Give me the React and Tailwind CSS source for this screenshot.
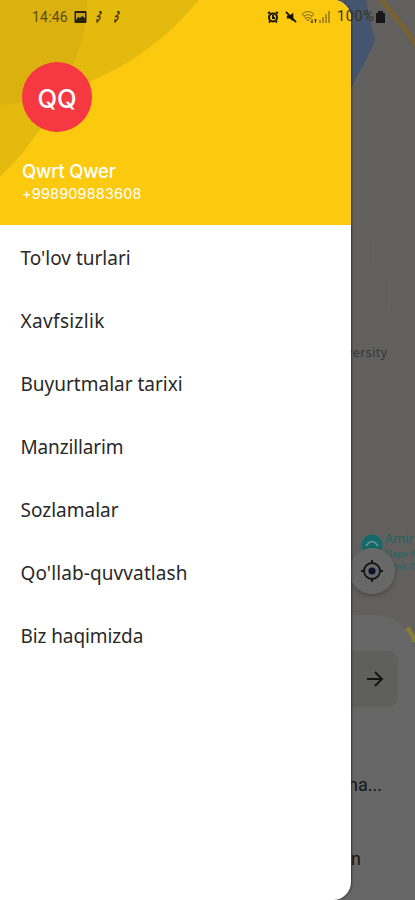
import React from 'react';

const items = [
  { label: "To'lov turlari", tracking: '' },
  { label: 'Xavfsizlik', tracking: 'tracking-[0.35px]' },
  { label: 'Buyurtmalar tarixi', tracking: '' },
  { label: 'Manzillarim', tracking: 'tracking-[-0.15px]' },
  { label: 'Sozlamalar', tracking: '' },
  { label: "Qo'llab-quvvatlash", tracking: 'tracking-[0.1px]' },
  { label: 'Biz haqimizda', tracking: 'tracking-[-0.1px]' },
];

function StatusBar() {
  return (
    <div className="absolute inset-x-0 top-0 z-20 flex h-[34px] items-center pl-8 font-['Roboto',sans-serif] text-[14px] text-[#5a4a10]">
      <span className="w-[42px] tracking-[0.2px]">14:46</span>
      <svg className="h-[12px] w-[13px]" viewBox="0 0 13 12">
        <rect x="0.5" y="0" width="12" height="12" rx="1" fill="#29230a" />
        <path d="M2 9V2h9v5L8 5 6 7 4 6Z" fill="#c9a51b" />
      </svg>
      {[0, 1].map((n) => (
        <svg key={n} className={n ? 'ml-[10px] h-3 w-2' : 'ml-[8px] h-3 w-2'} viewBox="0 0 8 12" fill="none" stroke="#4a3d0c" strokeWidth="1.3">
          <path d="M4.5 1 6 2.5 3 5.5 5.5 6M3 5.5 2 5M5.5 6 4 9 2 10.5M2 8v3h1" />
          <path d="M4 0.5h2v2" />
        </svg>
      ))}
      <svg className="ml-[146px] h-[12px] w-[12px]" viewBox="0 0 12 12" fill="none" stroke="#171407" strokeWidth="2">
        <circle cx="6" cy="6.5" r="4" />
        <path d="M1 2.5 3 1M9 1l2 1.5M6 4v3h2M2 11.5l1-1M10 11.5l-1-1" />
      </svg>
      <svg className="ml-[6px] h-[12px] w-[12px]" viewBox="0 0 13 13">
        <path d="M2 5h3l4-3v9L5 8H2Z" fill="#171407" />
        <path d="m1 1 11 11" stroke="#171407" strokeWidth="1.8" />
      </svg>
      <svg className="ml-[4px] h-[14px] w-[17px]" viewBox="0 0 17 14" fill="none" stroke="#8b711a" strokeWidth="1">
        <path d="M1 4q6-5 12 0L7 11ZM3 6q4-3 8 0M5 8q2-1 4 0" />
        <path d="M11 9v4M9.5 11.5 11 13l1-1.5M14.5 13V9M13.5 10.5l1-1.5 1 1.5" stroke="#4a3d0c" />
      </svg>
      <svg className="ml-[1px] h-3 w-3" viewBox="0 0 12 12" fill="#ad8b18">
        <path d="M0 9h2v3H0ZM3 6h2v6H3ZM6 3h2v9H6ZM9 0h2v12H9Z" />
      </svg>
      <span className="ml-[6px] w-[39px] whitespace-nowrap text-[14.5px] tracking-[0.6px] text-[#38321d]">100%</span>
      <svg className="h-[12px] w-[9px]" viewBox="0 0 9 12"><path d="M0 2h2V0h5v2h2v10H0Z" fill="#171717" /></svg>
    </div>
  );
}

function MapScreen() {
  return (
    <div className="absolute inset-0 bg-[#61605e]">
      <svg className="absolute inset-0 h-[900px] w-[415px]" viewBox="0 0 415 900" fill="none">
        <path d="M343 0H366Q369 16 375 41L367 58 351 88V20Z" fill="#445570" />
        <path d="M380-2 390 11 403 26 418 47" stroke="#7b642b" strokeWidth="5" />
        <path d="M380-2 390 11 403 26 418 47" stroke="#686052" strokeWidth="1" />
        <path d="M374 240V266M364 290V306M389 280V310M351 412 371 430" stroke="#656461" />
        <path d="M407 628 415 642" stroke="#877b35" strokeWidth="6" />
        <circle cx="372" cy="545" r="10.5" fill="#126b6b" />
        <path d="M366 546q6-9 12 0M368 549h8" stroke="#78918e" strokeWidth="1.7" />
      </svg>
      <span className="absolute left-[346px] top-[345px] font-['Noto_Sans',sans-serif] text-[12.5px] leading-[16px] tracking-[0.4px] text-[#353739]">versity</span>
      <div className="absolute left-[385px] top-[530px] flex flex-col whitespace-nowrap font-['Noto_Sans',sans-serif] text-[#246361]">
        <span className="text-[13px] leading-[17px]">Amir</span>
        <span className="text-[9.5px] leading-[13px]">Парк А</span>
        <span className="pl-[7px] text-[9.5px] leading-[13px]">mir T</span>
      </div>
      <div className="absolute left-[349px] top-[548px] flex h-[46px] w-[46px] items-center justify-center rounded-full bg-[#686868] shadow-[0_2px_5px_rgba(0,0,0,0.25)]">
        <svg className="h-6 w-6" viewBox="0 0 24 24" fill="none" stroke="#151518" strokeWidth="1.9">
          <circle cx="12" cy="12" r="8" /><circle cx="12" cy="12" r="3.6" fill="#10102a" stroke="none" />
          <path d="M12 1v4M12 19v4M1 12h4M19 12h4" />
        </svg>
      </div>
      <div className="absolute inset-x-0 bottom-0 h-[285px] rounded-t-[40px] bg-[#666] pt-[36px]">
        <div className="mr-[17px] flex h-[56px] items-center justify-end rounded-[10px] bg-[#5f5f5b] pr-[13px]">
          <svg className="h-5 w-5" viewBox="0 0 20 20" fill="none" stroke="#151515" strokeWidth="2"><path d="M2 10h15M10 3l7 7-7 7" /></svg>
        </div>
        <div className="flex flex-col gap-[50px] pl-[350px] pt-[66px] font-['Roboto',sans-serif] text-[18px] leading-6 text-[#161616]">
          <span className="-ml-[2px]">na...</span>
          <span className="pl-px">n</span>
        </div>
      </div>
    </div>
  );
}

export default function App() {
  return (
    <main className="relative h-[900px] w-[415px] overflow-hidden">
      <MapScreen />
      <aside className="absolute inset-y-0 left-0 z-10 w-[351px] overflow-hidden rounded-r-[18px] bg-white shadow-[1px_0_2px_rgba(0,0,0,0.45)]">
        <header className="relative h-[225px] bg-[#fbc90d] pl-[22px] pt-[62px]">
          <svg className="absolute left-0 top-0 h-[225px] w-[351px]" viewBox="0 0 351 225">
            <path d="M0 0H199Q153 55 93 80L38 132Q20 158 0 177Z" fill="#e5ba0f" />
            <path d="M0 0H87Q87 31 76 58Q55 104 0 105Z" fill="#dbb10f" />
          </svg>
          <div className="relative flex h-[70px] w-[70px] items-center justify-center rounded-full bg-[#f63842] font-['Inter',sans-serif] text-[25.5px] font-medium text-white"><span className="pt-[4px]">QQ</span></div>
          <div className="relative flex flex-col pt-[27px] font-['Inter',sans-serif] text-white">
            <span className="text-[18.5px] font-medium leading-[24px] tracking-[-0.2px]">Qwrt Qwer</span>
            <span className="pt-px text-[14.5px] leading-[20px] tracking-[0.15px]">+998909883608</span>
          </div>
        </header>
        <nav className="flex flex-col pl-[20.5px] pt-[2px] font-['Noto_Sans',sans-serif] text-[19px] text-[#292929]">
          {items.map(({ label, tracking }) => (
            <a key={label} className={`flex h-[63px] items-center ${tracking}`}>{label}</a>
          ))}
        </nav>
      </aside>
      <StatusBar />
    </main>
  );
}
